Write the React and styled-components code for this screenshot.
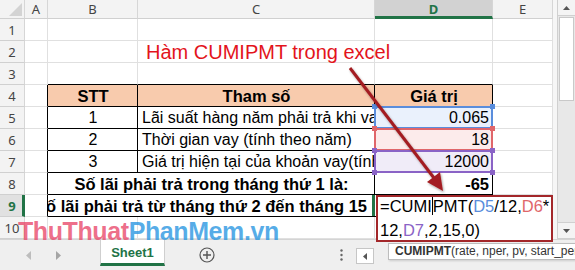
import React from 'react';
import styled, { createGlobalStyle, css } from 'styled-components';

const GREEN = '#217346';
const GRID = '#e0e0e0';
const BLUE = '#5a8ddc';
const RED = '#e0666a';
const PURPLE = '#8a63c6';

const Global = createGlobalStyle`
  html, body { margin: 0; padding: 0; background: #fff; }
  body { font-family: "Liberation Sans", Arial, sans-serif; }
`;

const Frame = styled.div`
  position: relative;
  width: 575px;
  height: 270px;
  overflow: hidden;
  display: grid;
  grid-template-rows: 239px 31px;
  background: #fff;
`;

const Top = styled.div`
  display: flex;
`;

const Sheet = styled.div`
  display: grid;
  grid-template-columns: 25px 23px 90px 237px 118px 60px;
  grid-template-rows: 19px repeat(10, 22px);
  width: 553px;
`;

const headBase = css`
  box-sizing: border-box;
  display: flex;
  align-items: center;
  justify-content: center;
  font-family: "Noto Sans", "Liberation Sans", sans-serif;
  font-size: 13px;
  color: #444;
  background: #f3f3f3;
  border-right: 1px solid #d6d6d6;
  border-bottom: 1px solid #d0d0d0;
`;

const Corner = styled.div`
  ${headBase};
  position: relative;
  &::after {
    content: '';
    position: absolute;
    right: 2px;
    bottom: 2px;
    width: 13px;
    height: 13px;
    background: #d3d3d3;
    clip-path: polygon(100% 0, 100% 100%, 0 100%);
  }
`;

const ColHead = styled.div`
  ${headBase};
  ${p => p.$active && css`
    background: #d2d2d2;
    color: ${GREEN};
    font-weight: 700;
    border-bottom: 3px solid ${GREEN};
    padding-top: 2px;
  `}
`;

const RowHead = styled.div`
  ${headBase};
  ${p => p.$active && css`
    background: #e1e1e1;
    color: ${GREEN};
    font-weight: 700;
    border-right: 3px solid ${GREEN};
    padding-left: 2px;
  `}
`;

const Cell = styled.div`
  box-sizing: border-box;
  position: ${p => (p.$rel ? 'relative' : 'static')};
  z-index: ${p => (p.$z ? 1 : 'auto')};
  display: flex;
  align-items: center;
  justify-content: ${p => (p.$align === 'right' ? 'flex-end' : p.$align === 'center' ? 'center' : 'flex-start')};
  padding: 1px ${p => p.$pr ?? 3}px 0 ${p => p.$pl ?? 4}px;
  grid-column: span ${p => p.$span || 1};
  font-size: ${p => (p.$bold ? '16.5px' : '16px')};
  font-weight: ${p => (p.$bold ? 700 : 400)};
  color: #000;
  white-space: nowrap;
  overflow: ${p => (p.$clip ? 'hidden' : 'visible')};
  background: ${p => p.$bg || '#fff'};
  border-right: 1px solid ${p => (p.$br ? '#000' : GRID)};
  border-bottom: 1px solid ${p => (p.$bb ? '#000' : GRID)};
`;

const Title = styled.span`
  font-size: 20px;
  color: #e3141c;
  padding-left: 4px;
`;

const RangeBox = styled.div`
  position: absolute;
  top: -1px;
  left: -1px;
  right: -1px;
  bottom: -1px;
  border: 2px solid ${p => p.$c};
  pointer-events: none;
`;

const Handle = styled.i`
  position: absolute;
  width: 5px;
  height: 5px;
  background: ${p => p.$c};
  ${p => (p.$v === 't' ? 'top: -4px;' : 'bottom: -4px;')}
  ${p => (p.$h === 'l' ? 'left: -4px;' : 'right: -4px;')}
`;

const ActiveEdge = styled.div`
  position: absolute;
  left: -3px;
  top: 0;
  bottom: 0;
  width: 3px;
  background: ${GREEN};
`;

const Range = ({ c }) => (
  <RangeBox $c={c}>
    <Handle $c={c} $v="t" $h="l" />
    <Handle $c={c} $v="t" $h="r" />
    <Handle $c={c} $v="b" $h="l" />
    <Handle $c={c} $v="b" $h="r" />
  </RangeBox>
);

const VScrollArea = styled.div`
  flex: 1;
  display: flex;
  padding-left: 4px;
  background: #f6f6f6;
`;

const VScroll = styled.div`
  flex: 1;
  display: flex;
  flex-direction: column;
  background: #e8e8e8;
  border-left: 1px solid #d0d0d0;
`;

const ScrollBtn = styled.div`
  height: 15px;
  display: flex;
  align-items: center;
  justify-content: center;
  background: #f4f4f4;
  border-bottom: 1px solid #d0d0d0;
  border-top: ${p => (p.$down ? '1px solid #d0d0d0' : '0')};
  margin-top: ${p => (p.$down ? 'auto' : '0')};
`;

const Thumb = styled.div`
  height: 82px;
  margin: 1px 1px 0 1px;
  background: #fff;
  border: 1px solid #c9c9c9;
`;

const TabBar = styled.div`
  display: flex;
  align-items: flex-start;
  background: #efefef;
  border-top: 1px solid #d4d4d4;
`;

const Nav = styled.div`
  width: 100px;
  height: 30px;
  display: flex;
  align-items: center;
  padding-left: 26px;
  gap: 25px;
  box-sizing: border-box;
`;

const SheetTab = styled.div`
  width: 65px;
  height: 26px;
  box-sizing: border-box;
  display: flex;
  align-items: center;
  justify-content: center;
  background: #fff;
  border-left: 1px solid #cfcfcf;
  border-right: 1px solid #cfcfcf;
  border-bottom: 3px solid ${GREEN};
  color: ${GREEN};
  font-weight: 700;
  font-size: 13px;
  padding-top: 2px;
`;

const AddBtn = styled.div`
  margin-left: 34px;
  height: 30px;
  display: flex;
  align-items: center;
`;

const Dots = styled.div`
  margin-left: 125px;
  height: 30px;
  display: flex;
  align-items: center;
`;

const HScrollBtn = styled.div`
  margin-left: 13px;
  margin-top: 8px;
  width: 16px;
  height: 14px;
  display: flex;
  align-items: center;
  justify-content: center;
  background: #fff;
  border: 1px solid #c6c6c6;
`;

const Editor = styled.div`
  position: absolute;
  left: 376px;
  top: 195px;
  width: 177px;
  height: 47px;
  box-sizing: border-box;
  border: 2px solid #a3272a;
  background: #fff;
  padding: 0 2px;
  font-size: 16.5px;
  line-height: 24px;
  color: #000;
  white-space: nowrap;
  overflow: hidden;
`;

const EditorLines = styled.div`
  margin-top: -3px;
`;

const Ref = styled.span`
  color: ${p => p.$c};
`;

const Caret = styled.span`
  display: inline-block;
  width: 1px;
  height: 19px;
  background: #000;
  vertical-align: -3px;
`;

const Tip = styled.div`
  position: absolute;
  left: 388px;
  top: 243px;
  height: 17px;
  padding: 0 8px 0 6px;
  box-sizing: border-box;
  border: 1px solid #bdbdbd;
  background: #fff;
  font-size: 12px;
  line-height: 15px;
  color: #333;
  white-space: nowrap;
  box-shadow: 1px 1px 2px rgba(0, 0, 0, 0.15);
`;

const ArrowSvg = styled.svg`
  position: absolute;
  left: 0;
  top: 0;
  pointer-events: none;
  overflow: visible;
`;

const Watermark = styled.div`
  position: absolute;
  left: 18px;
  top: 219px;
  font-size: 25px;
  line-height: 1;
  font-weight: 700;
  letter-spacing: -0.4px;
  white-space: nowrap;
  pointer-events: none;
`;

const WmPart = styled.span`
  color: ${p => p.$c};
`;

const COLS = ['A', 'B', 'C', 'D', 'E'];

export default function App() {
  const tbl = { $br: true, $bb: true };
  const head = { ...tbl, $bg: '#f8cbad', $bold: true, $align: 'center' };
  return (
    <>
      <Global />
      <Frame>
        <Top>
          <Sheet>
            <Corner />
            {COLS.map(c => (
              <ColHead key={c} $active={c === 'D'}>{c}</ColHead>
            ))}

            <RowHead>1</RowHead>
            <Cell /><Cell /><Cell /><Cell /><Cell />

            <RowHead>2</RowHead>
            <Cell /><Cell /><Cell $z><Title>Hàm CUMIPMT trong excel</Title></Cell><Cell /><Cell />

            <RowHead>3</RowHead>
            <Cell /><Cell $bb /><Cell $bb /><Cell $bb /><Cell />

            <RowHead>4</RowHead>
            <Cell $br />
            <Cell {...head}>STT</Cell>
            <Cell {...head}>Tham số</Cell>
            <Cell {...head}>Giá trị</Cell>
            <Cell />

            <RowHead>5</RowHead>
            <Cell $br />
            <Cell {...tbl} $align="center">1</Cell>
            <Cell {...tbl} $clip>Lãi suất hàng năm phải trả khi vay</Cell>
            <Cell {...tbl} $rel $align="right" $bg="#eaf1fc">0.065<Range c={BLUE} /></Cell>
            <Cell />

            <RowHead>6</RowHead>
            <Cell $br />
            <Cell {...tbl} $align="center">2</Cell>
            <Cell {...tbl} $clip>Thời gian vay (tính theo năm)</Cell>
            <Cell {...tbl} $rel $align="right" $bg="#fcebeb">18<Range c={RED} /></Cell>
            <Cell />

            <RowHead>7</RowHead>
            <Cell $br />
            <Cell {...tbl} $align="center">3</Cell>
            <Cell {...tbl} $clip>Giá trị hiện tại của khoản vay(tính bằng triệu đồng)</Cell>
            <Cell {...tbl} $rel $align="right" $bg="#f0ecf8">12000<Range c={PURPLE} /></Cell>
            <Cell />

            <RowHead>8</RowHead>
            <Cell $br />
            <Cell {...tbl} $span={2} $bold $align="center">Số lãi phải trả trong tháng thứ 1 là:</Cell>
            <Cell {...tbl} $bold $align="right">-65</Cell>
            <Cell />

            <RowHead $active>9</RowHead>
            <Cell $br />
            <Cell {...tbl} $span={2} $bold $align="right" $clip $pr={7}>Số lãi phải trả từ tháng thứ 2 đến tháng 15</Cell>
            <Cell {...tbl} $rel><ActiveEdge /></Cell>
            <Cell />

            <RowHead>10</RowHead>
            <Cell /><Cell /><Cell /><Cell /><Cell />
          </Sheet>
          <VScrollArea>
            <VScroll>
              <ScrollBtn>
                <svg width="7" height="4" viewBox="0 0 7 4"><path d="M0 4 L3.5 0 L7 4 Z" fill="#555" /></svg>
              </ScrollBtn>
              <Thumb />
              <ScrollBtn $down>
                <svg width="7" height="4" viewBox="0 0 7 4"><path d="M0 0 L3.5 4 L7 0 Z" fill="#555" /></svg>
              </ScrollBtn>
            </VScroll>
          </VScrollArea>
        </Top>

        <TabBar>
          <Nav>
            <svg width="5" height="9" viewBox="0 0 5 9"><path d="M5 0 L0 4.5 L5 9 Z" fill="#bdbdbd" /></svg>
            <svg width="5" height="9" viewBox="0 0 5 9"><path d="M0 0 L5 4.5 L0 9 Z" fill="#a5a5a5" /></svg>
          </Nav>
          <SheetTab>Sheet1</SheetTab>
          <AddBtn>
            <svg width="16" height="16" viewBox="0 0 16 16">
              <circle cx="8" cy="8" r="7" fill="none" stroke="#555" strokeWidth="1.2" />
              <path d="M8 4 V12 M4 8 H12" stroke="#555" strokeWidth="1.4" />
            </svg>
          </AddBtn>
          <Dots>
            <svg width="3" height="12" viewBox="0 0 3 12">
              <circle cx="1.5" cy="1.5" r="1.2" fill="#666" />
              <circle cx="1.5" cy="6" r="1.2" fill="#666" />
              <circle cx="1.5" cy="10.5" r="1.2" fill="#666" />
            </svg>
          </Dots>
          <HScrollBtn>
            <svg width="4" height="7" viewBox="0 0 4 7"><path d="M4 0 L0 3.5 L4 7 Z" fill="#555" /></svg>
          </HScrollBtn>
        </TabBar>

        <ArrowSvg width="575" height="270" viewBox="0 0 575 270">
          <defs>
            <filter id="sh" x="-20%" y="-20%" width="140%" height="140%">
              <feDropShadow dx="1" dy="1.5" stdDeviation="1.2" floodColor="#000" floodOpacity="0.35" />
            </filter>
          </defs>
          <g filter="url(#sh)">
            <line x1="350" y1="68" x2="434" y2="178" stroke="#a31f22" strokeWidth="3" />
            <polygon points="443,191 440,172 427,182" fill="#a31f22" />
          </g>
        </ArrowSvg>

        <Watermark>
          <WmPart $c="rgba(233, 72, 106, 0.78)">ThuThuat</WmPart>
          <WmPart $c="rgba(40, 150, 225, 0.78)">PhanMem.vn</WmPart>
        </Watermark>

        <Editor>
          <EditorLines>
            <div>=CUMI<Caret />PMT(<Ref $c={BLUE}>D5</Ref>/12,<Ref $c={RED}>D6</Ref>*</div>
            <div>12,<Ref $c={PURPLE}>D7</Ref>,2,15,0)</div>
          </EditorLines>
        </Editor>

        <Tip><b>CUMIPMT</b>(rate, nper, pv, start_period, end_period, type)</Tip>
      </Frame>
    </>
  );
}
